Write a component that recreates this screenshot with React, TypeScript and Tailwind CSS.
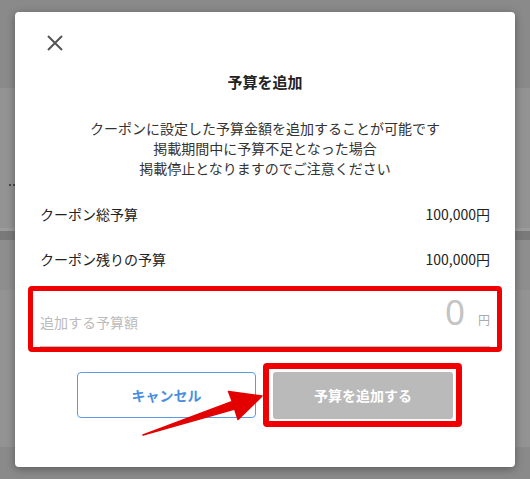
import React from "react";

const font = { fontFamily: '"Noto Sans CJK JP", "Noto Sans", sans-serif' };

export default function App() {
  return (
    <div className="relative w-[530px] h-[479px] overflow-hidden bg-[#8f8f8f]" style={font}>
      {/* dimmed background page */}
      <div className="flex flex-col w-full h-full">
        <div className="h-[88px] bg-[#8a8a8a]" />
        <div className="h-[140px] bg-[#939393] relative">
          <div className="absolute left-[9px] top-[96px] flex gap-[2px]">
            <span className="w-[2px] h-[2px] bg-[#444]" />
            <span className="w-[2px] h-[2px] bg-[#444]" />
          </div>
        </div>
        <div className="h-[3px] bg-[#9b9b9b]" />
        <div className="h-[9px] bg-[#7a7a7a]" />
        <div className="h-[50px] bg-[#8e8e8e]" />
        <div className="h-[157px] bg-[#939393]" />
        <div className="flex-1 bg-[#8a8a8a]" />
      </div>

      {/* modal */}
      <div className="absolute left-[15px] top-[12px] w-[500px] h-[455px] bg-white rounded-[4px] shadow-[0_2px_8px_rgba(0,0,0,0.35)] pt-[23px] px-[25px] flex flex-col">
        <div className="ml-[7px] w-[16px] h-[16px]">
          <svg width="16" height="16" viewBox="0 0 16 16">
            <path d="M1 1 L15 15 M15 1 L1 15" stroke="#555" strokeWidth="2" strokeLinecap="butt" />
          </svg>
        </div>
        <div className="mt-[20px] text-center text-[15px] leading-[22px] font-bold text-[#222]">予算を追加</div>
        <div className="mt-[25px] text-center text-[14px] leading-[20px] text-[#333]">
          <div>クーポンに設定した予算金額を追加することが可能です</div>
          <div>掲載期間中に予算不足となった場合</div>
          <div>掲載停止となりますのでご注意ください</div>
        </div>
        <div className="mt-[14px] flex flex-col text-[14px] text-[#222]">
          <div className="h-[45px] flex items-center justify-between">
            <span>クーポン総予算</span>
            <span>100,000円</span>
          </div>
          <div className="h-[45px] flex items-center justify-between">
            <span>クーポン残りの予算</span>
            <span>100,000円</span>
          </div>
        </div>
        <div className="mt-[4px] -mx-[12px] border-[5px] border-[#f00000] rounded-[4px] px-[7px]">
          <div className="h-[56px] border-b border-[#bdbdbd] flex items-end justify-between pb-[17px]">
            <span className="text-[14px] leading-none text-[#bbbbbb]">追加する予算額</span>
            <div className="flex items-baseline">
              <span className="text-[35px] leading-none font-normal text-[#c4c4c4]" style={{ fontFamily: '"Noto Sans", "Open Sans", sans-serif' }}>0</span>
              <span className="ml-[13px] text-[12px] leading-none text-[#aaaaaa]">円</span>
            </div>
          </div>
        </div>
        <div className="mt-[20px] flex justify-center gap-[17px]">
          <div className="w-[179px] h-[46px] border border-[#5b9be3] rounded-[4px] flex items-center justify-center text-[14px] font-bold text-[#4a8fde]">
            キャンセル
          </div>
          <div className="relative w-[180px] h-[47px] bg-[#bababa] rounded-[3px] flex items-center justify-center text-[14px] font-bold text-white">
            予算を追加する
            <span className="absolute -left-[10px] -right-[9px] -top-[9px] -bottom-[8px] border-[6px] border-[#f00000] rounded-[4px]" />
          </div>
        </div>
      </div>

      {/* annotation arrow */}
      <svg className="absolute left-0 top-0" width="530" height="479" viewBox="0 0 530 479">
        <polygon
          points="143,435 232.3,401.5 228.5,391.5 262,396 238,419.5 234.7,409.1"
          fill="#e30000"
          stroke="#e30000"
          strokeWidth="1.5"
          strokeLinejoin="round"
        />
      </svg>
    </div>
  );
}
